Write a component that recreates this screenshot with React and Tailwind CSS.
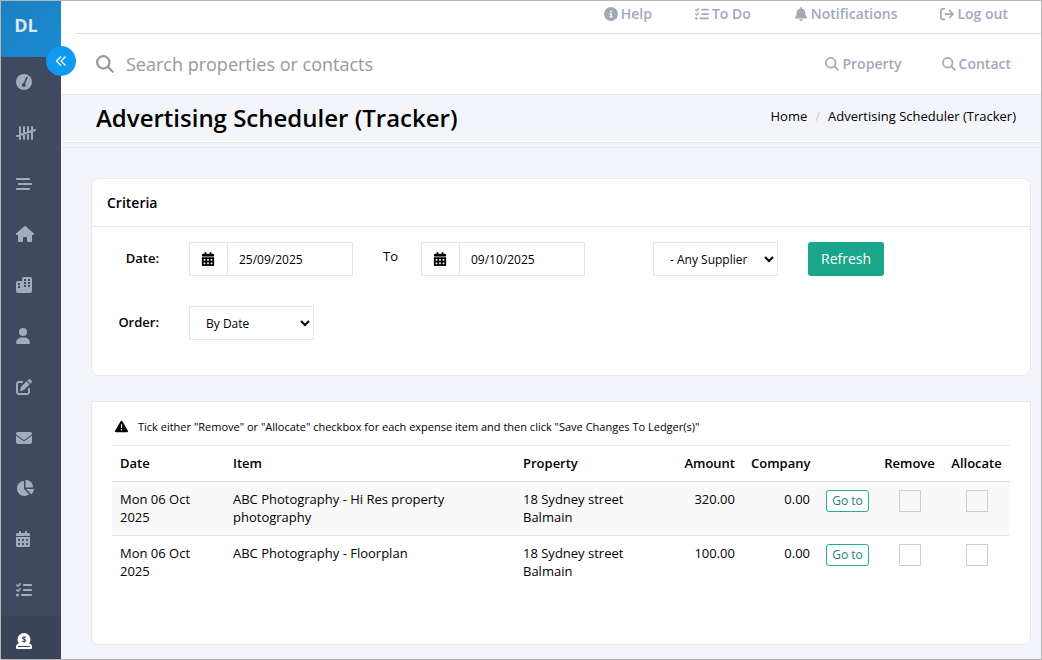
import { useState } from 'react';
import clsx from 'clsx';
import {
  FaArrowRightFromBracket,
  FaBarsStaggered,
  FaBell,
  FaCalendarDays,
  FaChartPie,
  FaCircleInfo,
  FaEnvelope,
  FaHouse,
  FaListCheck,
  FaPenToSquare,
  FaTriangleExclamation,
  FaUser,
} from 'react-icons/fa6';

const SearchIcon = ({ size = 14, className }) => (
  <svg width={size} height={size} viewBox="0 0 16 16" fill="none" stroke="currentColor" strokeWidth="2" className={className}>
    <circle cx="6.5" cy="6.5" r="5.5" />
    <path d="M10.5 10.5L15.4 15.4" />
  </svg>
);

const GaugeIcon = () => (
  <svg width="16" height="16" viewBox="0 0 16 16">
    <circle cx="8" cy="8" r="8" fill="currentColor" />
    <path d="M10.9 3.6L8.3 9.6" stroke="#3f4a61" strokeWidth="1.6" strokeLinecap="round" />
    <circle cx="7.8" cy="11" r="2" fill="#3f4a61" />
  </svg>
);

const TallyIcon = () => (
  <svg width="20" height="16" viewBox="0 0 20 16" fill="none" stroke="currentColor" strokeWidth="2" strokeLinecap="round">
    <path d="M4 2v12M8 2v12M12 2v12M16 2v12M1 11L19 5" />
  </svg>
);

const BuildingsIcon = () => (
  <svg width="16" height="16" viewBox="0 0 16 16">
    <path d="M8 0h6a2 2 0 0 1 2 2v12a2 2 0 0 1-2 2H2a2 2 0 0 1-2-2V6a2 2 0 0 1 2-2h4V2a2 2 0 0 1 2-2z" fill="currentColor" />
    <path
      d="M8 2h2v2H8zM12 2h2v2h-2zM8 5h2v2H8zM12 5h2v2h-2zM8 8h2v2H8zM12 8h2v2h-2zM2 6h2v2H2zM2 9h2v2H2z"
      fill="#3f4a61"
    />
  </svg>
);

const LedgerIcon = () => (
  <svg width="16" height="16" viewBox="0 0 16 16">
    <path d="M2 10.4L0 12.6V15a1 1 0 0 0 1 1h14a1 1 0 0 0 1-1v-2.4L14 10.4z" fill="currentColor" />
    <circle cx="8" cy="6.5" r="6.5" fill="currentColor" />
    <path d="M2 13.5h12" stroke="#3a4459" />
    <text x="8" y="9.5" textAnchor="middle" fontSize="8" fontWeight="700" fill="#3a4459">$</text>
  </svg>
);

const menu = [
  { label: 'Dashboard', icon: GaugeIcon },
  { label: 'Tally', icon: TallyIcon },
  { label: 'Listings', icon: FaBarsStaggered },
  { label: 'Properties', icon: FaHouse, size: 18 },
  { label: 'Buildings', icon: BuildingsIcon },
  { label: 'Contacts', icon: FaUser, narrow: true },
  { label: 'Edit', icon: FaPenToSquare },
  { label: 'Mail', icon: FaEnvelope },
  { label: 'Reports', icon: FaChartPie, size: 18 },
  { label: 'Calendar', icon: FaCalendarDays, narrow: true },
  { label: 'Tasks', icon: FaListCheck },
];

const expenses = [
  {
    date: 'Mon 06 Oct 2025',
    item: 'ABC Photography - Hi Res property photography',
    property: '18 Sydney street Balmain',
    amount: '320.00',
    company: '0.00',
  },
  {
    date: 'Mon 06 Oct 2025',
    item: 'ABC Photography - Floorplan',
    property: '18 Sydney street Balmain',
    amount: '100.00',
    company: '0.00',
  },
];

const Sidebar = () => (
  <aside className="relative flex w-[60px] shrink-0 flex-col bg-[#3f4a61] text-[#a2acbf]">
    <div className="flex h-14 items-center justify-center bg-linear-to-br from-[#1b80c0] to-[#1a8bd1] pr-[10px] pb-2 text-lg font-bold text-[#dfe4ed]">
      DL
    </div>
    <button
      aria-label="Collapse menu"
      className="absolute top-[45px] -right-[15px] z-10 flex size-[30px] items-center justify-center rounded-full bg-[#0f9af0] text-white"
    >
      <svg width="12" height="12" viewBox="0 0 12 12" fill="none" stroke="currentColor" strokeWidth="1.3">
        <path d="M6 1.5L1.5 6L6 10.5M10.5 1.5L6 6L10.5 10.5" />
      </svg>
    </button>
    <nav className="flex flex-1 flex-col">
      {menu.map(({ label, icon: Icon, size = 16, narrow }) => (
        <a key={label} href="#" aria-label={label} className="flex flex-1 items-center pb-px pl-[15px]">
          <Icon size={size} className={clsx(narrow && '-ml-px')} />
        </a>
      ))}
      <a href="#" aria-label="Advertising" className="flex h-[43px] items-start bg-[#3a4459] pt-[17px] pl-[15px] text-white">
        <LedgerIcon />
      </a>
    </nav>
  </aside>
);

const TopLink = ({ icon: Icon, children }) => (
  <a href="#" className="flex items-center gap-[3px]">
    <Icon size={14} />
    {children}
  </a>
);

const DateField = ({ id, label, value, onChange }) => (
  <div className="flex h-[34px] w-[164px] border border-[#e5e6e7]">
    <span className="flex w-[38px] shrink-0 items-center justify-center border-r border-[#e5e6e7] pr-px">
      <FaCalendarDays size={14} />
    </span>
    <input
      id={id}
      aria-label={label}
      value={value}
      onChange={(e) => onChange(e.target.value)}
      className="w-full min-w-0 px-[11px] pt-[2px] text-xs outline-none"
    />
  </div>
);

const Criteria = () => {
  const [from, setFrom] = useState('25/09/2025');
  const [to, setTo] = useState('09/10/2025');

  return (
    <section className="rounded-lg border border-[#e7eaec] bg-white">
      <h2 className="border-b border-[#e7eaec] px-[15px] pt-[14px] pb-[13px] text-sm leading-5 font-semibold">Criteria</h2>
      <form className="flex flex-col gap-[30px] pt-[15px] pb-[35px]" onSubmit={(e) => e.preventDefault()}>
        <div className="flex items-center">
          <label htmlFor="from" className="w-[97px] pr-[30px] pb-[2px] text-right font-semibold">Date:</label>
          <DateField id="from" value={from} onChange={setFrom} />
          <span className="w-[68px] pb-[6px] pl-[30px]">To</span>
          <DateField id="to" label="To" value={to} onChange={setTo} />
          <select aria-label="Supplier" className="ml-[68px] h-[34px] w-[125px] border border-[#e5e6e7] bg-white pl-3 text-xs">
            <option>- Any Supplier</option>
          </select>
          <button className="ml-[30px] h-[34px] rounded-[3px] bg-[#1aa689] px-[13px] text-sm text-white">Refresh</button>
        </div>
        <div className="flex items-center">
          <label htmlFor="order" className="w-[97px] pr-[30px] pb-[2px] text-right font-semibold">Order:</label>
          <select id="order" className="h-[34px] w-[125px] border border-[#e5e6e7] bg-white pl-3 text-xs">
            <option>By Date</option>
          </select>
        </div>
      </form>
    </section>
  );
};

const Tick = ({ label }) => (
  <input
    type="checkbox"
    aria-label={label}
    className="mx-auto block size-[22px] appearance-none border border-[#d2cec8] checked:bg-[#1ab394]"
  />
);

const Expenses = () => (
  <section className="rounded-b-lg border border-[#e7eaec] bg-white px-5 pt-4 pb-[55px]">
    <p className="flex h-[27px] items-start gap-[10px] pl-[3px] text-[11px] leading-[18px]">
      <FaTriangleExclamation size={13} className="mt-[2px]" />
      Tick either "Remove" or "Allocate" checkbox for each expense item and then click "Save Changes To Ledger(s)"
    </p>
    <table className="w-full table-fixed border-collapse text-left leading-[18px]">
      <thead>
        <tr className="border-t border-b border-t-[#e7eaec] border-b-[#dddddd] [&>th]:px-2 [&>th]:pt-2 [&>th]:pb-[9px] [&>th]:font-semibold">
          <th className="w-[113px]">Date</th>
          <th>Item</th>
          <th className="w-[160px]">Property</th>
          <th className="w-[68px] text-right">Amount</th>
          <th className="w-[75px] text-right">Company</th>
          <th className="w-[58px]" />
          <th className="w-[67px] text-center">Remove</th>
          <th className="w-[67px] text-center">Allocate</th>
        </tr>
      </thead>
      <tbody>
        {expenses.map((row) => (
          <tr
            key={row.item}
            className="border-b border-[#e7eaec] align-top last:border-0 odd:bg-[#f9f9f9] [&>td]:px-2 [&>td]:pt-2 [&>td]:pb-[9px]"
          >
            <td className="pr-8!">{row.date}</td>
            <td className="pr-[60px]!">{row.item}</td>
            <td className="pr-10!">{row.property}</td>
            <td className="text-right">{row.amount}</td>
            <td className="text-right">{row.company}</td>
            <td>
              <button className="block h-[22px] w-[43px] rounded-[3px] border border-[#1ab394] bg-white text-xs leading-5 text-[#1c7f78]">Go to</button>
            </td>
            <td>
              <Tick label={`Remove ${row.item}`} />
            </td>
            <td>
              <Tick label={`Allocate ${row.item}`} />
            </td>
          </tr>
        ))}
      </tbody>
    </table>
  </section>
);

export default function App() {
  return (
    <div className="flex min-h-screen border border-[#b5b5b5] bg-[#f3f5fa] font-['Open_Sans',sans-serif] text-[13px] leading-[18px] text-black">
      <Sidebar />
      <div className="min-w-0 flex-1">
        <header className="border-b border-[#e7eaec] bg-white">
          <div className="ml-[15px] flex h-[33px] items-start justify-end gap-[43px] border-b border-[#dddddd] pt-[3px] pr-[33px] text-sm font-semibold text-[#a1a9bd]">
            <TopLink icon={FaCircleInfo}>Help</TopLink>
            <TopLink icon={FaListCheck}>To Do</TopLink>
            <TopLink icon={FaBell}>Notifications</TopLink>
            <TopLink icon={FaArrowRightFromBracket}>Log out</TopLink>
          </div>
          <div className="flex h-[60px] items-center pr-[30px] pl-[35px]">
            <SearchIcon size={18} className="text-[#999999]" />
            <input
              aria-label="Search"
              placeholder="Search properties or contacts"
              className="ml-3 min-w-0 flex-1 text-lg outline-none placeholder:text-[#999999]"
            />
            <div className="flex gap-10 text-sm font-semibold text-[#a1a9bd]">
              <TopLink icon={SearchIcon}>Property</TopLink>
              <TopLink icon={SearchIcon}>Contact</TopLink>
            </div>
          </div>
        </header>
        <div className="border-b border-[#e7eaec]">
          <div className="flex items-center justify-between border-b border-white pt-[7px] pr-[25px] pb-[7px] pl-[35px]">
            <h1 className="text-2xl font-semibold">Advertising Scheduler (Tracker)</h1>
            <nav className="flex gap-2 pb-1">
              <a href="#">Home</a>
              <span className="text-[#cccccc]">/</span>
              <a href="#">Advertising Scheduler (Tracker)</a>
            </nav>
          </div>
        </div>
        <div className="h-[5px] border-b border-[#e7eaec]" />
        <main className="flex flex-col gap-[25px] pt-[30px] pr-[10px] pb-3 pl-[30px]">
          <Criteria />
          <Expenses />
        </main>
      </div>
    </div>
  );
}
